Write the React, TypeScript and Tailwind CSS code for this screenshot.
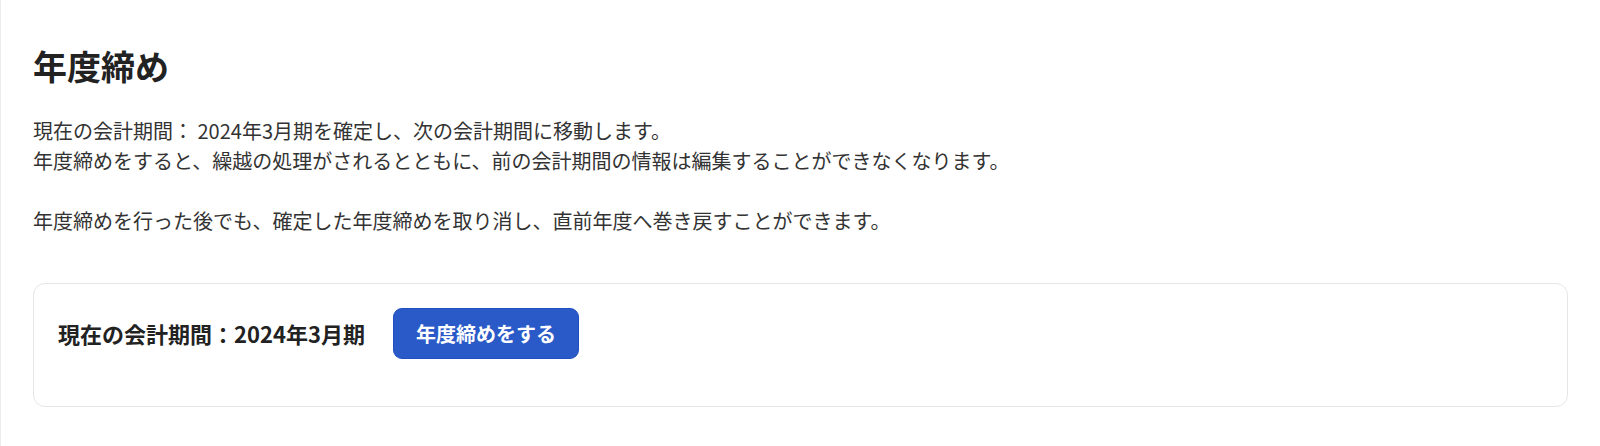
import React from "react";

export default function App() {
  return (
    <div
      className="min-h-[446px] w-full bg-white border-l border-[#ededed] px-8 pt-[42px] pb-10 text-[#333333]"
      style={{ fontFamily: '"Noto Sans CJK JP", "Noto Sans", sans-serif' }}
    >
      <h1 className="text-[34px] leading-[48px] font-bold text-[#222222]">年度締め</h1>
      <div className="mt-[26px] text-[20px] leading-[30px]">
        <p>現在の会計期間： 2024年3月期を確定し、次の会計期間に移動します。</p>
        <p>年度締めをすると、繰越の処理がされるとともに、前の会計期間の情報は編集することができなくなります。</p>
        <p className="h-[30px]"></p>
        <p>年度締めを行った後でも、確定した年度締めを取り消し、直前年度へ巻き戻すことができます。</p>
      </div>
      <div className="mt-[47px] rounded-xl border border-[#e6e6e6] px-6 pt-6 pb-[47px]">
        <div className="flex items-center gap-[28px]">
          <span className="text-[22px] font-bold text-[#222222]">現在の会計期間：2024年3月期</span>
          <button className="h-[51px] rounded-[9px] border border-[#2150c0] bg-[#2a5ac8] px-[22px] text-[20px] font-bold text-white">
            年度締めをする
          </button>
        </div>
      </div>
    </div>
  );
}
